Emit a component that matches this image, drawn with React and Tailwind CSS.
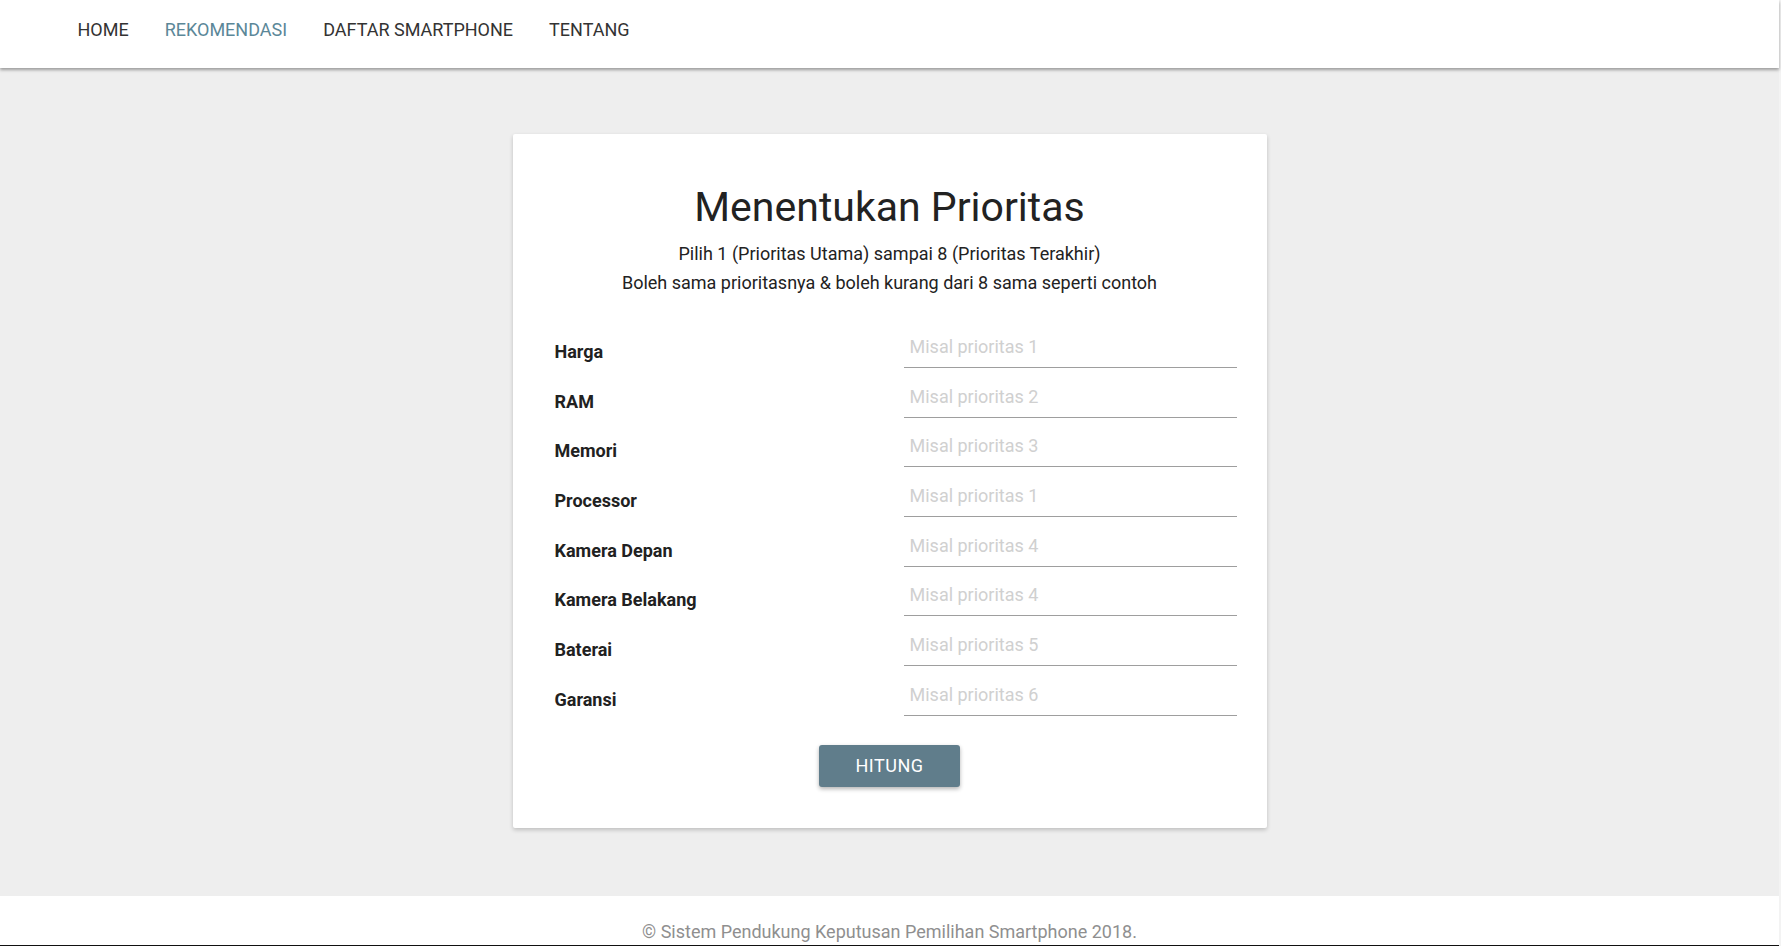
import React from 'react';

const menu = ['HOME', 'REKOMENDASI', 'DAFTAR SMARTPHONE', 'TENTANG'];

const kriteria = [
  { label: 'Harga', contoh: 'Misal prioritas 1' },
  { label: 'RAM', contoh: 'Misal prioritas 2' },
  { label: 'Memori', contoh: 'Misal prioritas 3' },
  { label: 'Processor', contoh: 'Misal prioritas 1' },
  { label: 'Kamera Depan', contoh: 'Misal prioritas 4' },
  { label: 'Kamera Belakang', contoh: 'Misal prioritas 4' },
  { label: 'Baterai', contoh: 'Misal prioritas 5' },
  { label: 'Garansi', contoh: 'Misal prioritas 6' },
];

const Navbar = () => (
  <nav className="relative z-10 h-[68px] bg-white shadow-[0_2px_3px_rgba(0,0,0,0.35)]">
    <ul className="flex pl-[59.5px] pt-[17.5px]">
      {menu.map((item) => (
        <li key={item}>
          <a
            href="#"
            className={`block px-[18px] text-[18px] leading-[24px] ${
              item === 'REKOMENDASI' ? 'text-[#5b8798]' : 'text-[#333]'
            }`}
          >
            {item}
          </a>
        </li>
      ))}
    </ul>
  </nav>
);

const App = () => {
  return (
    <div className="flex h-[946px] overflow-hidden font-['Roboto',sans-serif]">
      <div className="flex w-[1779px] flex-col">
        <Navbar />

        <main className="flex h-[828px] justify-center bg-[#eeeeee] pt-[66px]">
          <div className="h-[694px] w-[754px] rounded-[2px] bg-white pt-[49px] shadow-[0_2px_4px_rgba(0,0,0,0.2)]">
            <h1 className="text-center text-[41px] leading-[48px] text-[#222]">Menentukan Prioritas</h1>
            <div className="mt-[8px] text-center text-[18px] leading-[29px] text-[#222]">
              <p>Pilih 1 (Prioritas Utama) sampai 8 (Prioritas Terakhir)</p>
              <p>Boleh sama prioritasnya &amp; boleh kurang dari 8 sama seperti contoh</p>
            </div>

            <form className="mt-[27px] pl-[42px] pr-[30px]" onSubmit={(e) => e.preventDefault()}>
              {kriteria.map((k) => (
                <div key={k.label} className="flex h-[49.7px] items-start">
                  <label className="mt-[18px] w-[349px] text-[18px] font-bold leading-[20px] text-[#212121]">
                    {k.label}
                  </label>
                  <input
                    type="text"
                    placeholder={k.contoh}
                    className="h-[44px] flex-1 border-b border-[#9e9e9e] bg-transparent px-[6px] pt-[2px] text-[18px] outline-none placeholder:text-[#d0d0d0]"
                  />
                </div>
              ))}

              <div className="mt-[23.4px] flex justify-center">
                <button
                  type="submit"
                  className="ml-[-12px] h-[42px] w-[141px] rounded-[3px] bg-[#607d8b] text-[18px] tracking-[0.5px] text-white shadow-[0_2px_4px_rgba(0,0,0,0.3)]"
                >
                  HITUNG
                </button>
              </div>
            </form>
          </div>
        </main>

        <footer className="h-[49px] bg-white pt-[24px] text-center text-[18px] leading-[24px] text-[#8f8f8f]">
          © Sistem Pendukung Keputusan Pemilihan Smartphone 2018.
        </footer>
        <div className="h-[1px] bg-[#111]" />
      </div>
      <div className="w-[2px] bg-[#f3f3f3]" />
    </div>
  );
};

export default App;
